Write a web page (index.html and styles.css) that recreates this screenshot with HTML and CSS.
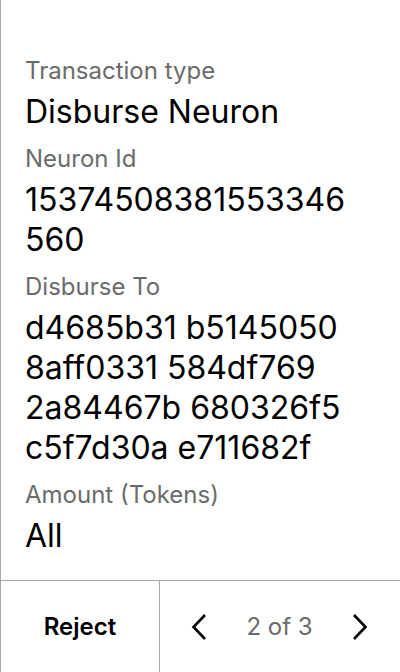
FILE: index.html
```html
<!DOCTYPE html>
<html>
<head>
<meta charset="utf-8">
<link rel="stylesheet" href="styles.css">
</head>
<body>
<div class="screen">
  <main class="content">
    <div class="field">
      <div class="label">Transaction type</div>
      <div class="value">Disburse Neuron</div>
    </div>
    <div class="field">
      <div class="label">Neuron Id</div>
      <div class="value break">15374508381553346560</div>
    </div>
    <div class="field">
      <div class="label">Disburse To</div>
      <div class="value">d4685b31 b5145050 8aff0331 584df769 2a84467b 680326f5 c5f7d30a e711682f</div>
    </div>
    <div class="field">
      <div class="label">Amount (Tokens)</div>
      <div class="value">All</div>
    </div>
  </main>
  <footer class="footer">
    <div class="reject">Reject</div>
    <div class="nav">
      <svg class="chev" width="24" height="28" viewBox="0 0 24 28"><path d="M18 2 L6.5 14 L18 26" fill="none" stroke="#000" stroke-width="2.6"/></svg>
      <span class="page">2 of 3</span>
      <svg class="chev" width="24" height="28" viewBox="0 0 24 28"><path d="M6 2 L17.5 14 L6 26" fill="none" stroke="#000" stroke-width="2.6"/></svg>
    </div>
  </footer>
</div>
</body>
</html>
```
FILE: styles.css
```css
* { box-sizing: border-box; }
html, body { margin: 0; padding: 0; background: #fff; }
body { font-family: Inter, "Noto Sans", sans-serif; color: #000; }
.screen {
  width: 400px;
  height: 672px;
  border-left: 1px solid #a8a8a8;
  display: flex;
  flex-direction: column;
}
.content {
  flex: 1;
  padding: 55px 40px 0 24px;
  display: flex;
  flex-direction: column;
  gap: 11px;
}
.label {
  font-size: 24px;
  line-height: 32px;
  margin-bottom: 5px;
  color: #6b6b6b;
}
.value {
  font-size: 32px;
  line-height: 40px;
  color: #000;
}
.break { word-break: break-all; }
.footer {
  height: 92px;
  border-top: 1px solid #a8a8a8;
  display: grid;
  grid-template-columns: 159px 1fr;
}
.reject {
  border-right: 1px solid #a8a8a8;
  display: flex;
  align-items: center;
  justify-content: center;
  font-size: 24px;
  font-weight: 600;
}
.nav {
  display: flex;
  align-items: center;
  justify-content: space-between;
  padding: 0 28px 0 27px;
}
.page {
  font-size: 24px;
  color: #6b6b6b;
}
.chev { display: block; }
```
